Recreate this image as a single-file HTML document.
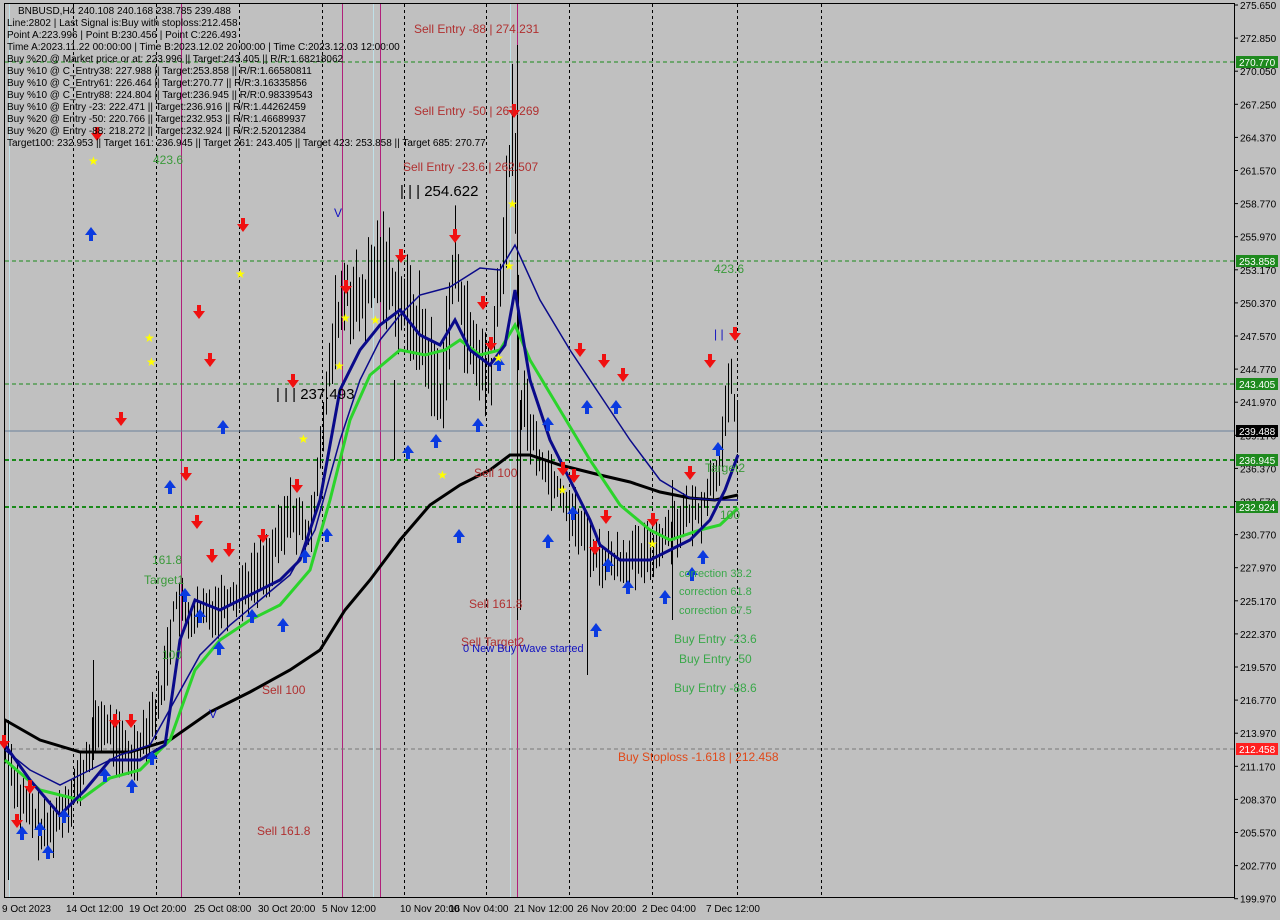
<!DOCTYPE html>
<html><head><meta charset="utf-8"><style>
body{margin:0;background:#c0c0c0;width:1280px;height:920px;overflow:hidden;font-family:"Liberation Sans",sans-serif}
svg{position:absolute;left:0;top:0}
</style></head><body>
<svg id="s" width="1280" height="920" xmlns="http://www.w3.org/2000/svg" font-family="Liberation Sans, sans-serif">
<rect x="0" y="0" width="1280" height="920" fill="#c0c0c0"/>
<rect x="4.5" y="3.5" width="1230" height="894" fill="none" stroke="#000"/>
<g id="vl"></g>
<g id="hl">
<line x1="5" x2="1234" y1="62" y2="62" stroke="#1a8a1a" stroke-dasharray="4,3"/>
<line x1="5" x2="1234" y1="261" y2="261" stroke="#1a8a1a" stroke-dasharray="4,3"/>
<line x1="5" x2="1234" y1="384" y2="384" stroke="#1a8a1a" stroke-dasharray="4,3"/>
<line x1="5" x2="1234" y1="460" y2="460" stroke="#1a8a1a" stroke-width="2" stroke-dasharray="4,3"/>
<line x1="5" x2="1234" y1="507" y2="507" stroke="#1a8a1a" stroke-width="2" stroke-dasharray="4,3"/>
<line x1="5" x2="1234" y1="749" y2="749" stroke="#777" stroke-dasharray="4,3"/>
<line x1="5" x2="1234" y1="431" y2="431" stroke="#6a7f9a"/>
</g>
<g id="candles" stroke="#000" stroke-width="1"></g>
<polyline fill="none" stroke="#000" stroke-width="3" points="5,720 40,740 80,752 130,752 170,740 210,712 250,692 290,670 320,650 345,610 370,580 400,540 430,505 460,485 490,470 510,455 530,455 560,465 600,475 630,482 660,492 690,498 715,500 738,495"/>
<polyline fill="none" stroke="#0a0a8a" stroke-width="1.5" points="5,750 30,770 60,785 90,770 120,755 150,745 175,700 200,655 230,625 260,600 290,575 315,530 340,440 360,380 380,340 400,315 420,295 450,287 480,268 500,270 515,245 540,300 570,350 600,395 630,440 660,480 690,498 715,500 738,500"/>
<polyline fill="none" stroke="#2bd42b" stroke-width="3" points="5,760 40,790 80,800 110,778 140,770 170,740 195,670 220,640 250,620 280,605 310,570 330,500 350,420 370,375 400,350 425,355 445,350 460,340 480,355 500,350 515,325 530,360 560,410 590,460 620,505 650,530 670,540 700,530 720,525 738,508"/>
<polyline fill="none" stroke="#0a0a8a" stroke-width="3" points="5,745 30,780 60,815 85,790 110,760 140,760 165,745 180,640 195,600 220,610 250,595 280,580 300,560 320,500 340,390 360,350 380,325 400,310 420,335 440,345 455,320 470,350 490,365 505,345 515,290 530,380 550,440 570,480 590,520 600,545 620,560 650,560 670,550 690,540 710,520 725,490 738,455"/>
<g id="marks"></g>
<g font-size="12" fill="#b03030">
<text x="414" y="33">Sell Entry -88 | 274.231</text>
<text x="414" y="115">Sell Entry -50 | 267.269</text>
<text x="403" y="171">Sell Entry -23.6 | 262.507</text>
<text x="474" y="477">Sell 100</text>
<text x="469" y="608">Sell 161.8</text>
<text x="461" y="646">Sell Target2</text>
<text x="262" y="694">Sell 100</text>
<text x="257" y="835">Sell 161.8</text>
</g>
<text x="618" y="761" font-size="12" fill="#e04818">Buy Stoploss -1.618 | 212.458</text>
<text x="463" y="652" font-size="11" fill="#1010c0">0 New Buy Wave started</text>
<g font-size="12" fill="#3aa84a">
<text x="679" y="577" font-size="11">correction 38.2</text>
<text x="679" y="595" font-size="11">correction 61.8</text>
<text x="679" y="614" font-size="11">correction 87.5</text>
<text x="674" y="643">Buy Entry -23.6</text>
<text x="679" y="663">Buy Entry -50</text>
<text x="674" y="692">Buy Entry -88.6</text>
</g>
<g font-size="12" fill="#3a9a3a">
<text x="153" y="164">423.6</text>
<text x="714" y="273">423.6</text>
<text x="705" y="472">Target2</text>
<text x="720" y="519">100</text>
<text x="152" y="564">161.8</text>
<text x="144" y="584">Target1</text>
<text x="162" y="659">100</text>
</g>
<text x="400" y="196" font-size="15" fill="#000">| | | 254.622</text>
<text x="276" y="399" font-size="15" fill="#000">| | | 237.493</text>
<text x="334" y="217" font-size="12" fill="#1010c0">V</text>
<text x="209" y="718" font-size="12" fill="#1010c0">V</text>
<text x="714" y="338" font-size="12" fill="#1010c0">| |</text>
<g font-size="10" fill="#000">
<text x="18" y="14">BNBUSD,H4  240.108 240.168 238.785 239.488</text>
<text x="7" y="26">Line:2802 | Last Signal is:Buy with stoploss:212.458</text>
<text x="7" y="38">Point A:223.996 | Point B:230.456 | Point C:226.493</text>
<text x="7" y="50">Time A:2023.11.22 00:00:00 | Time B:2023.12.02 20:00:00 | Time C:2023.12.03 12:00:00</text>
<text x="7" y="62">Buy %20 @ Market price or at: 223.996 || Target:243.405 || R/R:1.68218062</text>
<text x="7" y="74">Buy %10 @ C_Entry38: 227.988 || Target:253.858 || R/R:1.66580811</text>
<text x="7" y="86">Buy %10 @ C_Entry61: 226.464 || Target:270.77 || R/R:3.16335856</text>
<text x="7" y="98">Buy %10 @ C_Entry88: 224.804 || Target:236.945 || R/R:0.98339543</text>
<text x="7" y="110">Buy %10 @ Entry -23: 222.471 || Target:236.916 || R/R:1.44262459</text>
<text x="7" y="122">Buy %20 @ Entry -50: 220.766 || Target:232.953 || R/R:1.46689937</text>
<text x="7" y="134">Buy %20 @ Entry -88: 218.272 || Target:232.924 || R/R:2.52012384</text>
<text x="7" y="146">Target100: 232.953 || Target 161: 236.945 || Target 261: 243.405 || Target 423: 253.858 || Target 685: 270.77</text>
</g>
<g id="axis" font-size="10" fill="#000"></g>
<g id="time" font-size="10" fill="#000"></g>
</svg>
<script>
var NS="http://www.w3.org/2000/svg";
function el(p,t,a,txt){var e=document.createElementNS(NS,t);for(var k in a)e.setAttribute(k,a[k]);if(txt!=null)e.textContent=txt;document.getElementById(p).appendChild(e);return e;}
[73,156,239,322,404,486,569,652,737,821].forEach(function(x){el("vl","line",{x1:x+.5,x2:x+.5,y1:4,y2:897,stroke:"#000","stroke-dasharray":"3,3"});});
[181,342,380,517].forEach(function(x){el("vl","line",{x1:x+.5,x2:x+.5,y1:4,y2:897,stroke:"#b0207a"});});
[9,373,510].forEach(function(x){el("vl","line",{x1:x+.5,x2:x+.5,y1:4,y2:897,stroke:"#bfe0e8"});});
var labs=["275.650","272.850","270.050","267.250","264.370","261.570","258.770","255.970","253.170","250.370","247.570","244.770","241.970","239.170","236.370","233.570","230.770","227.970","225.170","222.370","219.570","216.770","213.970","211.170","208.370","205.570","202.770","199.970"];
labs.forEach(function(l,i){var y=5+i*33.1;el("axis","line",{x1:1234,x2:1238,y1:y,y2:y,stroke:"#000"});el("axis","text",{x:1240,y:y+4},l);});
[[62,"270.770","#1e8a1e"],[261,"253.858","#1e8a1e"],[384,"243.405","#1e8a1e"],[431,"239.488","#000"],[460,"236.945","#1e8a1e"],[507,"232.924","#1e8a1e"],[749,"212.458","#ff2020"]].forEach(function(b){el("axis","rect",{x:1236,y:b[0]-6,width:42,height:12,fill:b[2]});el("axis","text",{x:1239,y:b[0]+4,fill:"#fff"},b[1]);});
[[2,"9 Oct 2023"],[66,"14 Oct 12:00"],[129,"19 Oct 20:00"],[194,"25 Oct 08:00"],[258,"30 Oct 20:00"],[322,"5 Nov 12:00"],[400,"10 Nov 20:00"],[449,"16 Nov 04:00"],[514,"21 Nov 12:00"],[577,"26 Nov 20:00"],[642,"2 Dec 04:00"],[706,"7 Dec 12:00"]].forEach(function(t){el("time","text",{x:t[0],y:912},t[1]);});
var P=[[5,740],[20,800],[45,835],[80,780],[100,720],[130,760],[160,700],[175,600],[190,620],[210,610],[240,590],[270,560],[290,510],[310,540],[320,440],[335,330],[345,290],[360,310],[380,260],[400,300],[420,330],[440,400],[455,260],[470,350],[490,380],[505,230],[513,100],[520,400],[540,460],[560,490],[580,530],[600,560],[620,560],[640,560],[660,540],[680,520],[700,510],[720,460],[730,380],[738,430]];
function py(x){for(var i=0;i<P.length-1;i++){if(x>=P[i][0]&&x<=P[i+1][0]){var t=(x-P[i][0])/(P[i+1][0]-P[i][0]);return P[i][1]+t*(P[i+1][1]-P[i][1]);}}return 430;}
var seed=7;function r(){seed=(seed*9301+49297)%233280;return seed/233280;}
for(var x=5;x<=738;x+=3){var c=py(x);var v=(x>330&&x<530)?40:24;var a=c-v*(0.3+1.2*r()),b=c+v*(0.3+1.2*r());el("candles","line",{x1:x+.5,x2:x+.5,y1:a,y2:b});}
[[8,720,880],[93,660,760],[517,45,620],[520,400,610],[587,560,675],[672,480,620],[394,380,460]].forEach(function(s){el("candles","line",{x1:s[0]+.5,x2:s[0]+.5,y1:s[1],y2:s[2]});});
function down(x,y){el("marks","path",{d:"M"+(x-2)+" "+(y-8)+"h4v6h4l-6 8l-6-8h4z",fill:"#f01010"});}
function up(x,y){el("marks","path",{d:"M"+(x-2)+" "+(y+8)+"h4v-6h4l-6-8l-6 8h4z",fill:"#0a3ae0"});}
function star(x,y){el("marks","text",{x:x-5,y:y+4,fill:"#ffff00","font-size":"12"},"★");}
[[97,135],[243,226],[199,313],[210,361],[121,420],[293,382],[186,475],[197,523],[212,557],[229,551],[263,537],[297,487],[115,722],[131,722],[346,288],[401,257],[455,237],[483,304],[491,345],[514,112],[580,351],[604,362],[623,376],[690,474],[710,362],[735,335],[653,521],[595,549],[606,518],[563,470],[574,477],[4,743],[30,788],[17,822]].forEach(function(p){down(p[0],p[1]);});
[[91,233],[170,486],[185,594],[200,615],[219,647],[283,624],[252,615],[305,555],[327,534],[408,451],[436,440],[459,535],[478,424],[499,363],[548,423],[548,540],[573,512],[596,629],[608,564],[628,586],[616,406],[587,406],[665,596],[692,573],[718,448],[703,556],[132,785],[105,774],[40,828],[48,851],[22,832],[64,815],[152,757],[223,426]].forEach(function(p){up(p[0],p[1]);});
[[93,161],[240,274],[149,338],[151,362],[303,439],[345,318],[375,320],[442,475],[509,266],[512,204],[562,490],[652,544],[339,366],[498,358]].forEach(function(p){star(p[0],p[1]);});
</script>
</body></html>
